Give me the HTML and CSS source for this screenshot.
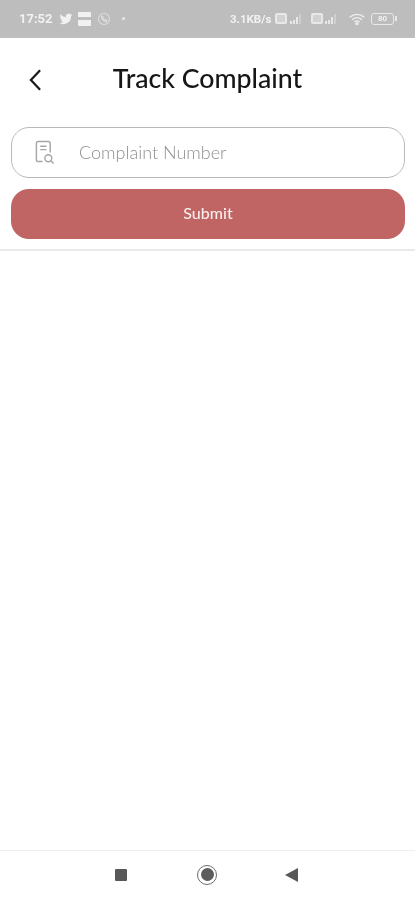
FILE: index.html
```html
<!DOCTYPE html>
<html lang="en">
<head>
<meta charset="utf-8">
<title>Track Complaint</title>
<link rel="stylesheet" href="styles.css">
</head>
<body>
<div class="page">
  <div class="statusbar">
    <div class="status-group">
      <span class="time">17:52</span>
      <svg class="ic-tw" viewBox="0 0 24 24"><path d="M23 5c-.8.4-1.7.6-2.6.7.9-.6 1.6-1.4 2-2.5-.9.5-1.8.9-2.9 1.100A4.500 4.500 0 0 0 11.800 8.400C8 8.200 4.700 6.400 2.500 3.700c-1.200 2-.6 4.600 1.400 6-.7 0-1.400-.2-2-.6 0 2.200 1.500 4.100 3.600 4.500-.7.200-1.400.2-2 .1.600 1.800 2.200 3.100 4.200 3.100A9 9 0 0 1 1 18.700 12.800 12.800 0 0 0 20.700 7.300c.9-.6 1.700-1.400 2.300-2.300z"/></svg>
      <span class="ic-msg"></span>
      <svg class="ic-wa" viewBox="0 0 24 24"><circle cx="12" cy="12" r="9.500"/><path d="M8 7.500c-1 2 .5 4.500 2.500 6.500s4 3 5.500 2.500l1-2-2.500-1.500-1 1c-1.500-.5-3-2-3.500-3.500l1-1L9.500 7z"/></svg>
      <span class="dot"></span>
    </div>
    <div class="status-group">
      <span class="speed">3.1KB/s</span>
      <span class="sim"></span>
      <span class="bars"><i></i><i></i><i></i><i></i></span>
      <span class="sim sim-2"></span>
      <span class="bars"><i></i><i></i><i></i><i></i></span>
      <svg class="ic-wifi" viewBox="0 0 24 18"><path d="M1 6.500c6.500-6 15.500-6 22 0M4.500 10c4.500-4 10.500-4 15 0M8 13.500c2.500-2 5.500-2 8 0"/><circle cx="12" cy="16" r="1.500"/></svg>
      <span class="battery"><span class="battery-level">80</span></span>
    </div>
  </div>

  <header class="topbar">
    <svg class="back" viewBox="0 0 16 26"><path d="M13 2.500 3 13l10 10.500"/></svg>
    <h1 class="title">Track Complaint</h1>
  </header>

  <main class="form">
    <label class="field">
      <svg class="field-icon" viewBox="0 0 22 26">
        <path d="M9 22.500H4.500a2 2 0 0 1-2-2V3.500a2 2 0 0 1 2-2h10.500a2 2 0 0 1 2 2V13"/>
        <path d="M6.500 6.500h6.500M6.500 10h6.500"/>
        <circle cx="15" cy="19" r="3.600"/>
        <path d="M17.700 21.700 20.500 24.500"/>
      </svg>
      <span class="placeholder">Complaint Number</span>
    </label>
    <button class="submit" type="button">Submit</button>
  </main>

  <div class="content"></div>

  <nav class="navbar">
    <span class="nav-square"></span>
    <span class="nav-circle"><span></span></span>
    <span class="nav-back"></span>
  </nav>
</div>
</body>
</html>
```
FILE: styles.css
```css
* { box-sizing: border-box; }
html, body { margin: 0; padding: 0; background: #fff; }
body { font-family: "Lato", "Liberation Sans", sans-serif; }
.page { width: 415px; height: 900px; display: flex; flex-direction: column; overflow: hidden; background: #fff; }

.statusbar {
  height: 38px; flex: none; background: #bdbdbd; color: #f1f1f1;
  display: flex; align-items: center; justify-content: space-between;
  padding: 0 21px 1px 19px;
}
.status-group { display: flex; align-items: center; filter: blur(.7px); }
.time { font: 700 13px "Roboto", sans-serif; width: 40px; }
.ic-tw { width: 14px; height: 14px; fill: #f1f1f1; margin-right: 5px; }
.ic-msg { width: 13px; height: 14px; background: linear-gradient(#f1f1f1 0 5px, #bdbdbd 5px 8px, #f1f1f1 8px); border-radius: 1px; margin-right: 6px; }
.ic-wa { width: 14px; height: 14px; fill: none; stroke: #dcdcdc; stroke-width: 2; margin-right: 11px; }
.dot { width: 3px; height: 3px; border-radius: 50%; background: #e8e8e8; }
.speed { font: 700 11.500px "Roboto", sans-serif; width: 45px; white-space: nowrap; }
.sim { width: 12px; height: 11px; border: 2px solid #e8e8e8; border-radius: 2px; background: #d2d2d2; margin-right: 3px; }
.sim-2 { margin-left: 7px; margin-right: 2px; }
.bars { display: flex; align-items: flex-end; gap: 1px; height: 10px; width: 14px; }
.bars i { width: 2px; background: #e8e8e8; }
.bars i:nth-child(1) { height: 3px; }
.bars i:nth-child(2) { height: 4px; }
.bars i:nth-child(3) { height: 7px; }
.bars i:nth-child(4) { height: 10px; background: #cfcfcf; }
.ic-wifi { width: 16px; height: 12px; fill: #eee; stroke: #eee; stroke-width: 2; margin: 0 6px 0 10px; }
.ic-wifi path { fill: none; }
.battery { position: relative; width: 23px; height: 12px; border: 1.500px solid #e8e8e8; border-radius: 3px; display: flex; align-items: center; justify-content: center; }
.battery::after { content: ""; position: absolute; right: -4px; top: 2px; width: 2px; height: 5px; background: #e8e8e8; }
.battery-level { font: 700 8px "Roboto", sans-serif; }

.topbar { height: 84px; flex: none; display: flex; align-items: center; justify-content: center; position: relative; padding-bottom: 5px; filter: blur(.4px); }
.back { position: absolute; left: 28px; top: 30px; width: 15px; height: 24px; fill: none; stroke: #1a1a1a; stroke-width: 2.400; }
.title { margin: 0; font: 500 26.700px "Lato", sans-serif; color: #161616; }

.form { flex: none; padding: 5px 10px 0 11px; display: flex; flex-direction: column; gap: 11px; filter: blur(.3px); }
.field { height: 51px; border: 1px solid #b9b9b9; border-radius: 18px; display: flex; align-items: center; padding: 0 0 0 22px; background: #fff; }
.field-icon { width: 21px; height: 25px; fill: none; stroke: #a6a6a6; stroke-width: 1.500; margin-right: 24px; }
.placeholder { font-size: 18px; font-weight: 300; color: #8f8f8f; padding-bottom: 2px; }
.submit { height: 50px; border: 0; border-radius: 18px; background: #c06464; color: #f9eeee; font: 500 16px "Lato", sans-serif; padding: 0 0 4px; }

.content { flex: 1; margin-top: 10px; border-top: 2px solid #e9e9e9; }

.navbar { height: 50px; flex: none; border-top: 1px solid #f0f0f0; display: flex; align-items: center; padding: 0 0 2px 115px; filter: blur(.3px); }
.nav-square { width: 12px; height: 12px; background: #585858; border-radius: 1px; margin-right: 70px; }
.nav-circle { width: 20px; height: 20px; border: 1.500px solid #6c6c6c; border-radius: 50%; display: flex; align-items: center; justify-content: center; margin-right: 68px; }
.nav-circle span { width: 13px; height: 13px; border-radius: 50%; background: #5c5c5c; }
.nav-back { width: 0; height: 0; border-style: solid; border-width: 7px 13px 7px 0; border-color: transparent #585858 transparent transparent; }
```
